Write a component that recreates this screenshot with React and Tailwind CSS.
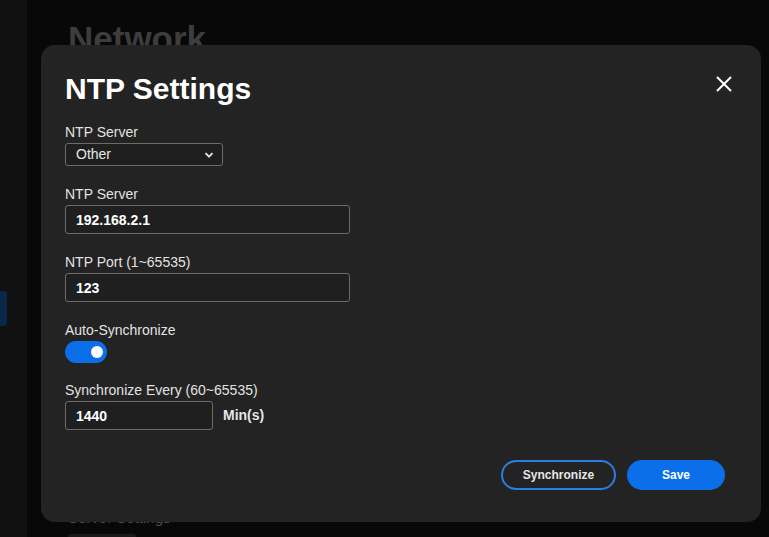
const fieldClassName =
  "h-[29px] rounded-[3px] border border-[#6b6b6b] bg-[#1f1f1f] px-[10px] text-[14px] font-bold text-white outline-none";

function Field({ label, className = "", children }) {
  return (
    <div className={className}>
      <div className="text-[14px] leading-[20px] text-[#e2e2e2]">{label}</div>
      <div className="mt-px">{children}</div>
    </div>
  );
}

export default function App() {
  return (
    <div
      className="relative flex h-[537px] w-[769px] overflow-hidden bg-[#080808]"
      style={{ fontFamily: '"Liberation Sans", Arial, sans-serif' }}
    >
      <aside className="w-[27px] shrink-0 bg-[#111111] pt-[291px]">
        <div className="h-[35px] w-[7px] rounded-r-[3px] bg-[#0a2747]" />
      </aside>

      <main className="flex flex-1 flex-col pl-[41px] pt-[19px]">
        <h1 className="text-[35px] font-bold leading-[40px] text-[#3d3d3d]">Network</h1>
        <div className="mt-auto pb-[6px] text-[15px] leading-[20px] text-[#4d4d4d]">Server Settings</div>
        <div className="h-[3px] w-[68px] rounded-t bg-[#1a1a1a]" />
      </main>

      <div className="absolute left-[41px] top-[45px] flex h-[477px] w-[720px] flex-col rounded-[14px] bg-[#232323] pl-[24px] pr-[36px] pt-[26px] pb-[32px]">
        <button type="button" className="absolute right-[29px] top-[31px] flex h-[16px] w-[16px] items-center justify-center text-white">
          <svg width="16" height="16" viewBox="0 0 16 16" fill="none" stroke="currentColor" strokeWidth="2">
            <path d="M1 1L15 15M15 1L1 15" />
          </svg>
        </button>

        <h2 className="text-[30px] font-bold leading-[36px] text-white">NTP Settings</h2>

        <Field label="NTP Server" className="mt-[15px]">
          <div className="flex h-[23px] w-[158px] items-center justify-between rounded-[3px] border border-[#6b6b6b] bg-[#1f1f1f] pl-[10px] pr-[8px] text-[14px] text-[#e6e6e6]">
            <span>Other</span>
            <svg width="10" height="10" viewBox="0 0 10 10" fill="none" stroke="#e6e6e6" strokeWidth="1.8">
              <path d="M1.5 3.2L5 6.7L8.5 3.2" />
            </svg>
          </div>
        </Field>

        <Field label="NTP Server" className="mt-[18px]">
          <input readOnly value="192.168.2.1" className={`${fieldClassName} w-[285px]`} />
        </Field>

        <Field label="NTP Port (1~65535)" className="mt-[18px]">
          <input readOnly value="123" className={`${fieldClassName} w-[285px]`} />
        </Field>

        <Field label="Auto-Synchronize" className="mt-[18px]">
          <div className="flex h-[22px] w-[42px] items-center justify-end rounded-full bg-[#0a6fe8] pr-[4px]">
            <div className="h-[12px] w-[12px] rounded-full bg-white" />
          </div>
        </Field>

        <Field label="Synchronize Every (60~65535)" className="mt-[17px]">
          <div className="flex items-center gap-[10px]">
            <input readOnly value="1440" className={`${fieldClassName} w-[148px]`} />
            <span className="text-[14px] font-bold text-[#e6e6e6]">Min(s)</span>
          </div>
        </Field>

        <div className="mt-auto flex justify-end gap-[11px]">
          <button
            type="button"
            className="h-[30px] w-[115px] rounded-full border-2 border-[#2a7de1] text-[12px] font-bold text-[#e6e6e6]"
          >
            Synchronize
          </button>
          <button type="button" className="h-[30px] w-[98px] rounded-full bg-[#0a6fe8] text-[12px] font-bold text-white">
            Save
          </button>
        </div>
      </div>
    </div>
  );
}
